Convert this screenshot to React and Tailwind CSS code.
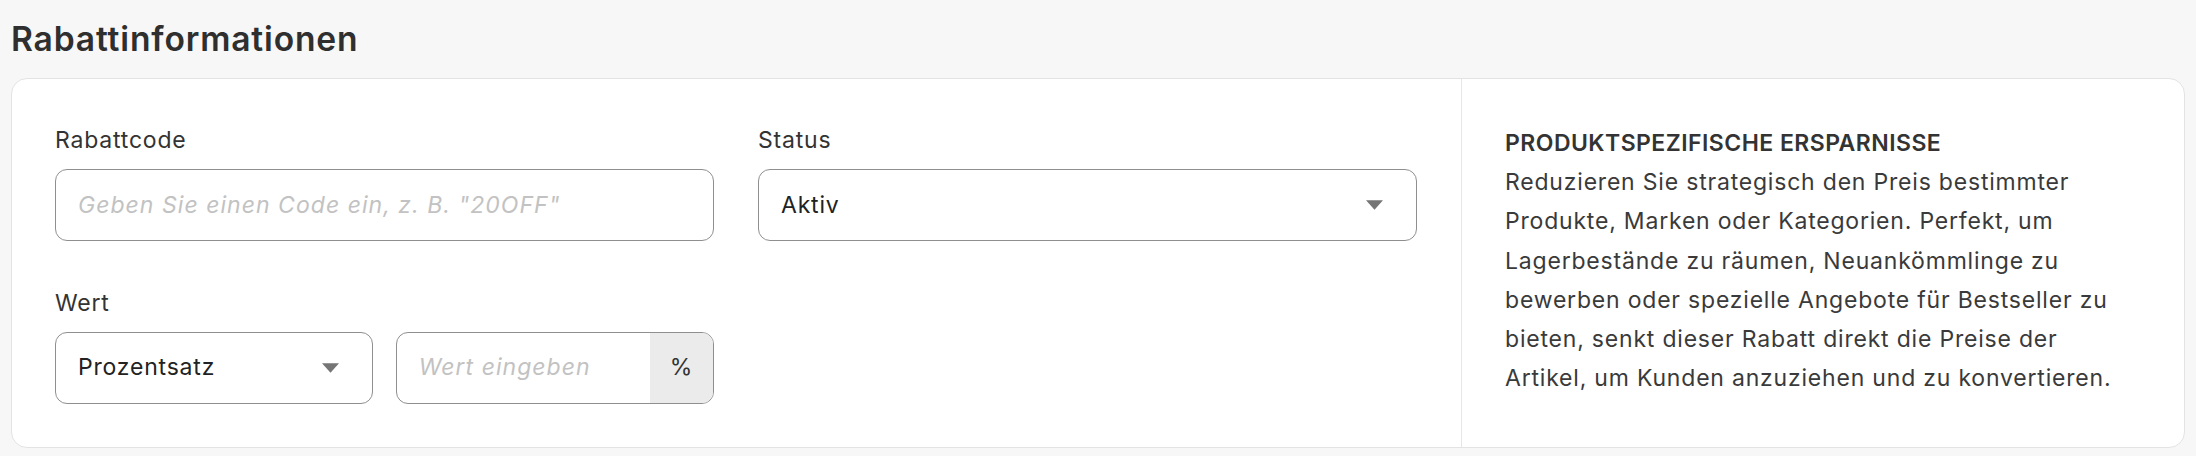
import React from "react";

function Caret() {
  return (
    <svg viewBox="0 0 18 10" className="w-[17px] h-[10px] shrink-0" fill="#757575">
      <path d="M0 0h18L9 10z" />
    </svg>
  );
}

function Label({ children }) {
  return (
    <label className="block text-[23px] leading-[33.6px] text-[#333] mb-[11.2px]">
      {children}
    </label>
  );
}

function SelectBox({ value }) {
  return (
    <div className="h-[72px] flex items-center justify-between rounded-[12px] border border-[#8f8f8f] bg-white pl-[22px] pr-[33px] text-[23px] text-[#222]">
      <span>{value}</span>
      <Caret />
    </div>
  );
}

export default function App() {
  return (
    <div className="min-h-screen bg-[#f7f7f7] px-[11px] pt-[18px] pb-[10px] font-['Inter',sans-serif] tracking-[0.05em]">
      {/* Title */}
      <h2 className="text-[33.6px] leading-[42px] font-semibold tracking-[0.025em] text-[#2f2f2f] mb-[18px]">
        Rabattinformationen
      </h2>

      {/* Card */}
      <div className="flex bg-white border border-[#e3e3e3] rounded-2xl">
        {/* Form */}
        <div className="flex-1 pl-[43px] pr-[44px] pt-[45px] pb-[43px] grid grid-cols-2 gap-x-[44px] gap-y-[46px] items-start">
          <div>
            <Label>Rabattcode</Label>
            <input
              type="text"
              placeholder={'Geben Sie einen Code ein, z. B. "20OFF"'}
              className="w-full h-[72px] rounded-[12px] border border-[#8f8f8f] bg-white px-[22px] text-[23px] tracking-[0.045em] text-[#222] placeholder:italic placeholder:text-[#c2c2c2] outline-none"
            />
          </div>

          <div>
            <Label>Status</Label>
            <SelectBox value="Aktiv" />
          </div>

          <div>
            <Label>Wert</Label>
            <div className="grid grid-cols-2 gap-[22.4px]">
              <SelectBox value="Prozentsatz" />
              <div className="h-[72px] flex rounded-[12px] border border-[#8f8f8f] bg-white overflow-hidden">
                <input
                  type="text"
                  placeholder="Wert eingeben"
                  className="flex-1 min-w-0 px-[22px] text-[23px] tracking-[0.045em] text-[#222] placeholder:italic placeholder:text-[#c2c2c2] outline-none"
                />
                <div className="w-[63px] bg-[#ebebeb] flex items-center justify-center text-[23px] text-[#333]">
                  %
                </div>
              </div>
            </div>
          </div>
        </div>

        {/* Info */}
        <div className="w-[723px] shrink-0 border-l border-[#e6e6e6] px-[43px] pt-[45px] pb-[44px] text-[23px] leading-[39.2px] text-[#3a3a3a]">
          <h3 className="font-semibold uppercase tracking-[0.02em] text-[#333]">
            Produktspezifische Ersparnisse
          </h3>
          <p>
            Reduzieren Sie strategisch den Preis bestimmter Produkte, Marken oder
            Kategorien. Perfekt, um Lagerbestände zu räumen, Neuankömmlinge zu
            bewerben oder spezielle Angebote für Bestseller zu bieten, senkt
            dieser Rabatt direkt die Preise der Artikel, um Kunden anzuziehen und
            zu konvertieren.
          </p>
        </div>
      </div>
    </div>
  );
}
